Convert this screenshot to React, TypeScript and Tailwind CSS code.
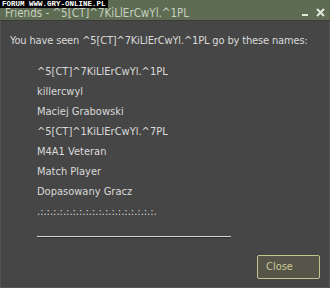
import React from "react";

const names = [
  "^5[CT]^7KiLlErCwYl.^1PL",
  "killercwyl",
  "Maciej Grabowski",
  "^5[CT]^1KiLlErCwYl.^7PL",
  "M4A1 Veteran",
  "Match Player",
  "Dopasowany Gracz",
];

const font = { fontFamily: '"DejaVu Sans Condensed", "Liberation Sans", Arial, sans-serif' };

export default function App() {
  return (
    <div
      className="relative flex h-[288px] w-[330px] flex-col overflow-hidden bg-[#464646] text-[11px] text-[#dadada]"
      style={font}
    >
      {/* forum watermark */}
      <div className="absolute left-0 top-0 z-10 bg-black px-[2px] font-['Liberation_Mono',monospace] text-[7.5px] font-bold leading-[8px] text-white">
        FORUM WWW.GRY-ONLINE.PL
      </div>

      <div className="flex h-[21px] shrink-0 items-start justify-between border-b border-[#3a3a3a] bg-[#5d6c53] pl-[5px] pr-[5px] pt-[7px]">
        <span className="whitespace-nowrap text-[11.5px] leading-[13px] text-[#c9d1c1]">
          Friends - ^5[CT]^7KiLlErCwYl.^1PL
        </span>
        <div className="flex items-end gap-[8px] pt-[1px]">
          <span className="mb-[1px] block h-[2px] w-[6px] bg-[#e2e8da]" />
          <svg width="9" height="9" viewBox="0 0 9 9">
            <path d="M1 1 L8 8 M8 1 L1 8" stroke="#e2e8da" strokeWidth="2" />
          </svg>
        </div>
      </div>

      <div className="flex flex-1 flex-col border-x border-b border-[#555] px-[9px] pt-[12px]">
        <p className="whitespace-nowrap text-[11px] leading-[15px] tracking-[-0.15px]">
          You have seen ^5[CT]^7KiLlErCwYl.^1PL go by these names:
        </p>

        <ul className="mt-[17px] flex flex-col pl-[27px]">
          {names.map((name) => (
            <li key={name} className="h-[20px] whitespace-nowrap leading-[14px]">
              {name}
            </li>
          ))}
          <li className="h-[20px] whitespace-nowrap leading-[14px]">
            .:.:.:.:.:.:.:.:.:.:.:.:.:.:.:.:.:.:.
          </li>
        </ul>

        <div className="ml-[27px] mt-[11px] h-[2px] w-[194px] border-b border-[#2f2f2f] bg-[#d4d4d4]" />

        <div className="mt-auto flex justify-end pb-[8px]">
          <button
            type="button"
            className="h-[24px] w-[63px] rounded-[2px] border border-[#c6c48e] bg-[#55554a] pl-[8px] text-left text-[11px] text-[#cbc994]"
          >
            Close
          </button>
        </div>
      </div>
    </div>
  );
}
